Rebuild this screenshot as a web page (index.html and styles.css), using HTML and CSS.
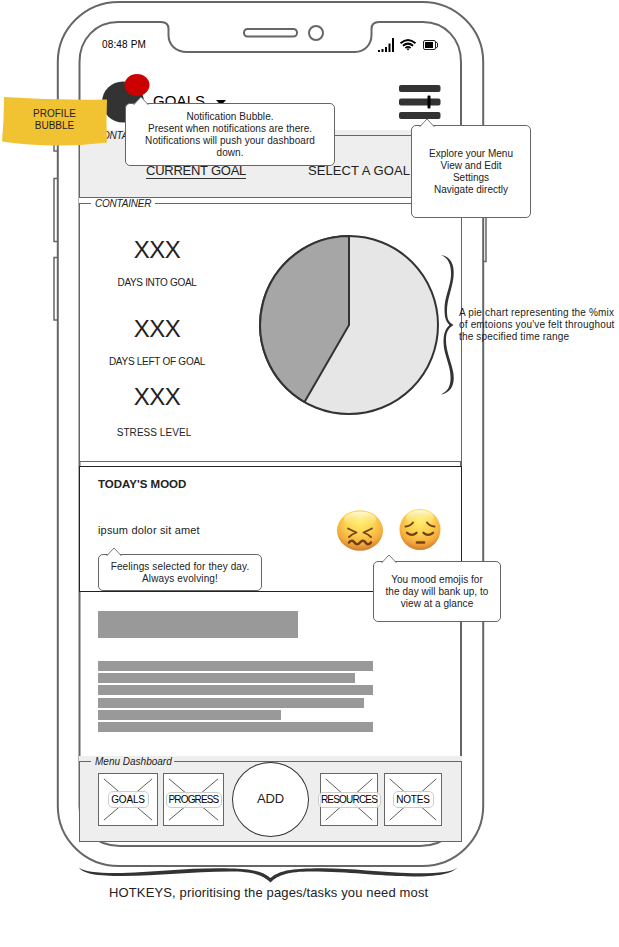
FILE: index.html
```html
<!DOCTYPE html>
<html lang="en">
<head>
<meta charset="utf-8">
<title>Goals dashboard wireframe</title>
<link rel="stylesheet" href="styles.css">
</head>
<body>
<main class="board">
  <svg class="device" width="619" height="947" viewBox="0 0 619 947" fill="none" stroke="#666" stroke-width="2">
    <path d="M57 118h-3v33h3M57 178.500h-3v63h3M57 257.500h-3v62.500h3M484 178.500h2v83h-2" stroke-width="1.500"/>
    <rect x="57.800" y="2" width="425.400" height="864" rx="61" ry="60"/>
    <path d="M79.500 62C79.500 39 96 22 118 22H161C166 22 168.500 24.500 168.500 29V35C168.500 45 176 52 187 52H355C365 52 371.500 44 371.500 35V29C371.500 24.500 374 22 379 22H423C445 22 461 39 461 62V806C461 830 445 846 420 846H120C96 846 79.500 830 79.500 806Z"/>
    <rect x="244" y="29" width="53" height="7.500" rx="3.500"/>
    <circle cx="316" cy="33" r="7"/>
  </svg>

  <div class="screen">
    <div class="status">
      <span class="time">08:48 PM</span>
      <svg width="62" height="16" viewBox="0 0 62 16">
        <path d="M0 12h2v2H0zM3.500 11h2v3h-2zM7 9h2v5H7zM10.500 5.500h2V14h-2zM14 0h2v14h-2z"/>
        <g fill="none" stroke="#000" stroke-width="2"><path d="M22.500 5.300Q30 -1.200 37.500 5.300M25 7.800Q30 3.400 35 7.800" /><path d="M27.300 10Q30 7.600 32.700 10" stroke-width="1.600"/></g>
        <path d="M28.300 10.500h3.400L30 12.500z"/>
        <rect x="45.500" y="2.500" width="12" height="9" rx="1.500" fill="none" stroke="#222"/><path d="M47 4h8v6h-8z"/><path d="M58 4l1.500 1v4L58 10" fill="none" stroke="#222"/>
      </svg>
    </div>

    <header class="topbar">
      <svg class="avatar" width="52" height="50" viewBox="0 0 52 50">
        <ellipse cx="22" cy="29" rx="21" ry="20.500" fill="#333"/>
        <ellipse cx="36" cy="12" rx="12.500" ry="11" fill="#c00"/>
      </svg>
      <h1>GOALS</h1>
      <svg class="caret" width="10" height="6" viewBox="0 0 10 6"><path d="M0 0h10L5 5.500z"/></svg>
      <svg class="menu" width="42" height="35" viewBox="0 0 42 35" fill="#333">
        <rect width="41.500" height="7" rx="2"/><rect y="13.500" width="41.500" height="7" rx="2"/><rect y="27" width="41.500" height="7" rx="2"/>
        <rect x="28.500" y="10.500" width="3" height="13" rx="1" fill="#000"/>
      </svg>
    </header>

    <section class="group shaded">
      <div class="group-box tabs">
        <h2 class="legend">CONTAINER</h2>
        <a class="tab current">CURRENT GOAL</a>
        <a class="tab other">SELECT A GOAL</a>
      </div>
    </section>

    <section class="group">
      <div class="group-box stats">
        <h2 class="legend">CONTAINER</h2>
        <div class="figures">
          <div class="figure"><b>XXX</b><span class="w1">DAYS INTO GOAL</span></div>
          <div class="figure"><b>XXX</b><span class="w2">DAYS LEFT OF GOAL</span></div>
          <div class="figure"><b>XXX</b><span class="w3">STRESS LEVEL</span></div>
        </div>
        <svg class="pie" width="182" height="182" viewBox="0 0 182 182" stroke="#333" stroke-width="2" stroke-linejoin="round">
          <circle cx="91" cy="91" r="89" fill="#e6e6e6"/>
          <path d="M91 91V2A89 89 0 0 0 46.500 168Z" fill="#a6a6a6"/>
        </svg>
      </div>
    </section>

    <section class="mood">
      <h3>TODAY'S MOOD</h3>
      <div class="mood-row">
        <p>ipsum dolor sit amet</p>
        <svg width="105" height="44" viewBox="0 0 105 44">
          <defs>
            <radialGradient id="skin" cx=".5" cy=".3" r=".72"><stop offset="0" stop-color="#ffec6b"/><stop offset=".45" stop-color="#fbd04f"/><stop offset=".75" stop-color="#f4ab3c"/><stop offset="1" stop-color="#cf762e"/></radialGradient>
            <linearGradient id="shine" x2="0" y2="1"><stop offset="0" stop-color="#fffbe0" stop-opacity=".95"/><stop offset="1" stop-color="#ffec6b" stop-opacity="0"/></linearGradient>
          </defs>
          <ellipse cx="24" cy="22.500" rx="23" ry="20.200" fill="url(#skin)"/>
          <ellipse cx="24" cy="11.500" rx="16" ry="8" fill="url(#shine)"/>
          <g fill="none" stroke="#734016" stroke-width="1.800" stroke-linecap="round" stroke-linejoin="round">
            <path d="M12 20.500Q17 23 20.500 24.500Q16 26 13 29M36 20.500Q31 23 27.500 24.500Q32 26 35 29"/>
            <path d="M13 34.500q3-3.500 5.500 0t5.500 0t5.500 0t5.500 0" stroke-width="2.600"/>
          </g>
          <circle cx="84" cy="21.500" r="20.500" fill="url(#skin)"/>
          <ellipse cx="84" cy="10" rx="14" ry="8" fill="url(#shine)"/>
          <g fill="none" stroke="#734016" stroke-width="1.900" stroke-linecap="round">
            <path d="M69.500 18.500Q74.500 18 77 14.500M98.500 18.500Q93.500 18 91 14.500"/>
            <path d="M71 24.800Q76 29 80.500 24.800M87.500 24.800Q92 29 97 24.800" stroke-width="2.300"/>
            <path d="M81 34.500h7" stroke-width="2.700"/>
          </g>
        </svg>
      </div>
    </section>

    <section class="copy">
      <div class="block"></div>
      <div class="line"></div><div class="line l2"></div><div class="line"></div><div class="line l4"></div><div class="line l5"></div><div class="line"></div>
    </section>

    <section class="group shaded dock">
      <div class="group-box hotkeys">
        <h2 class="legend dock-name">Menu Dashboard</h2>
        <div class="key k1"><svg viewBox="0 0 60 53" preserveAspectRatio="none"><path d="M5 5L55 48M55 5L5 48"/></svg><span>GOALS</span></div>
        <div class="key k2"><svg viewBox="0 0 60 53" preserveAspectRatio="none"><path d="M5 5L55 48M55 5L5 48"/></svg><span class="high">PROGRESS</span></div>
        <div class="add">ADD</div>
        <div class="key k3"><svg viewBox="0 0 60 53" preserveAspectRatio="none"><path d="M5 5L55 48M55 5L5 48"/></svg><span class="high">RESOURCES</span></div>
        <div class="key k4"><svg viewBox="0 0 60 53" preserveAspectRatio="none"><path d="M5 5L55 48M55 5L5 48"/></svg><span>NOTES</span></div>
      </div>
    </section>
  </div>

  <aside class="sticky">
    <svg width="108" height="52" viewBox="0 0 108 52"><path d="M4 1Q56 4.500 107 3.500Q106 25 107 46.500Q80 50 52 49.500Q24 49 2 45.500Q4 24 4 1Z" fill="#f1c232"/></svg>
    <p>PROFILE<br>BUBBLE</p>
  </aside>

  <aside class="tip tip-bell"><svg class="beak" width="18" height="9" viewBox="0 0 18 9"><path d="M1.500 9L9 1l7.500 8"/></svg><p>Notification Bubble.<br>Present when notifications are there.<br>Notifications will push your dashboard<br>down.</p></aside>
  <aside class="tip tip-menu"><svg class="beak" width="18" height="9" viewBox="0 0 18 9"><path d="M1.500 9L9 1l7.500 8"/></svg><p>Explore your Menu<br>View and Edit<br>Settings<br>Navigate directly</p></aside>
  <aside class="tip tip-feel"><svg class="beak" width="18" height="9" viewBox="0 0 18 9"><path d="M1.500 9L9 1l7.500 8"/></svg><p>Feelings selected for they day.<br>Always evolving!</p></aside>
  <aside class="tip tip-emoji"><svg class="beak" width="18" height="9" viewBox="0 0 18 9"><path d="M1.500 9L9 1l7.500 8"/></svg><p>You mood emojis for<br>the day will bank up, to<br>view at a glance</p></aside>

  <svg class="braces" width="619" height="947" viewBox="0 0 619 947" fill="#333">
    <path d="M441 255C450 256 455 264 453.500 277C452 290 447 299 447 311C447 319 448.500 322 453.500 325C448.500 328 446 332 446 340C446 352 452 363 453.500 374C455 386 450 393 441 394.500C448 391 451 386 450.500 376C450 364 443.500 354 443.500 342C443.500 333 445.500 329 449.500 325C445.500 321 444.500 317 444.500 309C444.500 297 450 288 451 276C451.500 264 448 258 441 255Z"/>
    <path d="M79 867.500C84 872 98 873.300 122 873C160 872 190 867.500 230 868.500C252 869 262 871 270.500 878C279 871 289 869 311 868.500C350 867.500 375 872.500 413 873.200C438 873.500 452 872 457.500 867.500C451 874 438 876.500 413 876.500C375 876 350 871.500 311 871.500C288 871.500 278 875 270.500 882.500C263 875 253 871.500 230 871.500C190 871.500 160 876 122 876C98 876 83 874 79 867.500Z"/>
  </svg>
  <p class="note note-pie">A pie chart representing the %mix<br>of emtoions you've felt throughout<br>the specified time range</p>
  <p class="note note-keys">HOTKEYS, prioritising the pages/tasks you need most</p>
</main>
</body>
</html>
```
FILE: styles.css
```css
* { box-sizing: border-box; }
body { margin: 0; background: #fff; }
.board { position: relative; width: 619px; height: 947px; overflow: hidden; font: 10px/12px "Liberation Sans", Arial, sans-serif; color: #222; }
h1, h2, h3, p { margin: 0; font-weight: normal; }
svg { display: block; }
.device, .braces { position: absolute; top: 0; left: 0; }

.screen { position: relative; width: 383px; margin-left: 79px; padding-top: 22px; }
.status { display: flex; justify-content: space-between; align-items: flex-start; height: 50px; padding: 16px 22px 0 23px; color: #000; }
.time { margin-top: 1px; letter-spacing: .15px; }
.topbar { display: flex; height: 58px; padding: 1px 21px 0 22px; color: #000; }
.topbar h1 { font-size: 15px; line-height: 18px; margin-top: 19px; letter-spacing: .1px; }
.caret { margin: 27px 0 0 11px; }
.menu { margin: 12px 0 0 auto; }

.group { padding-top: 5px; background: #fff; }
.shaded { background: #eee; }
.group-box { position: relative; border: 1px solid #666; }
.legend { position: absolute; top: -6px; left: 11px; padding: 0 4px; font: italic 10px/11px "Liberation Sans", Arial, sans-serif; letter-spacing: -.2px; color: #222; background: #fff; }
.shaded .legend { background: #eee; }
.dock .dock-name { padding: 0 2px 0 4px; letter-spacing: 0; }

.tabs { display: flex; height: 63px; padding: 27px 51px 0 66px; justify-content: space-between; font-size: 13px; line-height: 15px; }
.tab { height: 16px; white-space: nowrap; }
.current { border-bottom: 1px solid #333; letter-spacing: -.25px; }
.other { letter-spacing: .08px; }

.stats { display: flex; height: 259px; }
.figures { width: 154px; padding-top: 31px; text-align: center; }
.figure { height: 79px; }
.figure:nth-child(2) { height: 68px; }
.figure b { display: block; font-size: 24px; line-height: 30px; font-weight: normal; letter-spacing: -.5px; }
.figure span { display: block; margin-top: 12px; }
.w1 { letter-spacing: -.33px; }
.w2 { letter-spacing: -.27px; }
.figure .w3 { margin-top: 15px; padding-right: 6px; letter-spacing: .05px; }
.pie { margin: 30px 0 0 24px; }

.mood { height: 126px; margin-top: 4px; padding: 10px 18px 0; border: 1px solid #222; background: #fff; }
.mood h3 { font-size: 11.5px; line-height: 14px; font-weight: bold; letter-spacing: 0; }
.mood-row { display: flex; justify-content: space-between; margin-top: 17px; padding-right: 2px; }
.mood-row p { margin-top: 15px; font-size: 11px; line-height: 14px; letter-spacing: .17px; }

.copy { height: 164px; padding: 19px 0 0 19px; }
.block { width: 200px; height: 27px; margin-bottom: 23px; background: #999; }
.line { width: 275px; height: 10px; margin-bottom: 2.2px; background: #999; }
.l2 { width: 257px; }
.l4 { width: 266px; }
.l5 { width: 183px; }

.hotkeys { display: flex; height: 81px; padding-left: 18px; }
.key { position: relative; display: flex; align-items: center; justify-content: center; height: 53px; margin-top: 11px; border: 1px solid #666; background: #fff; color: #000; }
.key svg { position: absolute; inset: 0; width: 100%; height: 100%; fill: none; stroke: #555; stroke-width: 1; }
.key span { position: relative; flex: none; height: 17px; padding: 2px 2px 0; border: 1px solid #ccc; border-radius: 5px; background: rgba(255, 255, 255, .8); text-align: center; }
.key .high { padding-top: 1px; height: 16px; letter-spacing: -.6px; }
.k1 { width: 60px; }
.k1 span, .k4 span { width: 41px; letter-spacing: -.2px; }
.k2 { width: 61px; margin-left: 5px; }
.k2 .high { width: 56px; letter-spacing: -.85px; }
.k3 { width: 58px; margin-left: 11px; }
.k3 .high { width: 63px; letter-spacing: -.8px; }
.k4 { width: 58px; margin-left: 6px; }
.add { display: flex; align-items: center; justify-content: center; width: 77px; height: 75px; margin-left: 8px; padding-bottom: 2px; border: 1px solid #333; border-radius: 50%; background: #fff; font-size: 13px; line-height: 15px; letter-spacing: -.2px; }

.sticky { position: absolute; left: 0; top: 96px; width: 108px; }
.sticky p { position: absolute; top: 12px; left: 0; width: 109px; text-align: center; }
.tip { position: absolute; display: flex; align-items: center; justify-content: center; border: 1px solid #666; border-radius: 5px; background: #fff; text-align: center; white-space: nowrap; }
.beak { position: absolute; top: -8px; left: 6px; fill: #fff; stroke: #777; }
.tip-bell { left: 125px; top: 103px; width: 210px; height: 63px; letter-spacing: .05px; }
.tip-menu { left: 411px; top: 125px; width: 120px; height: 93px; }
.tip-feel { left: 98px; top: 554px; width: 164px; height: 37px; letter-spacing: .12px; }
.tip-emoji { left: 373px; top: 561px; width: 128px; height: 61px; letter-spacing: .05px; }
.note { position: absolute; white-space: nowrap; }
.note-pie { left: 459px; top: 307px; letter-spacing: .17px; }
.note-keys { left: 109px; top: 885px; font-size: 13px; line-height: 16px; letter-spacing: .14px; }
```
